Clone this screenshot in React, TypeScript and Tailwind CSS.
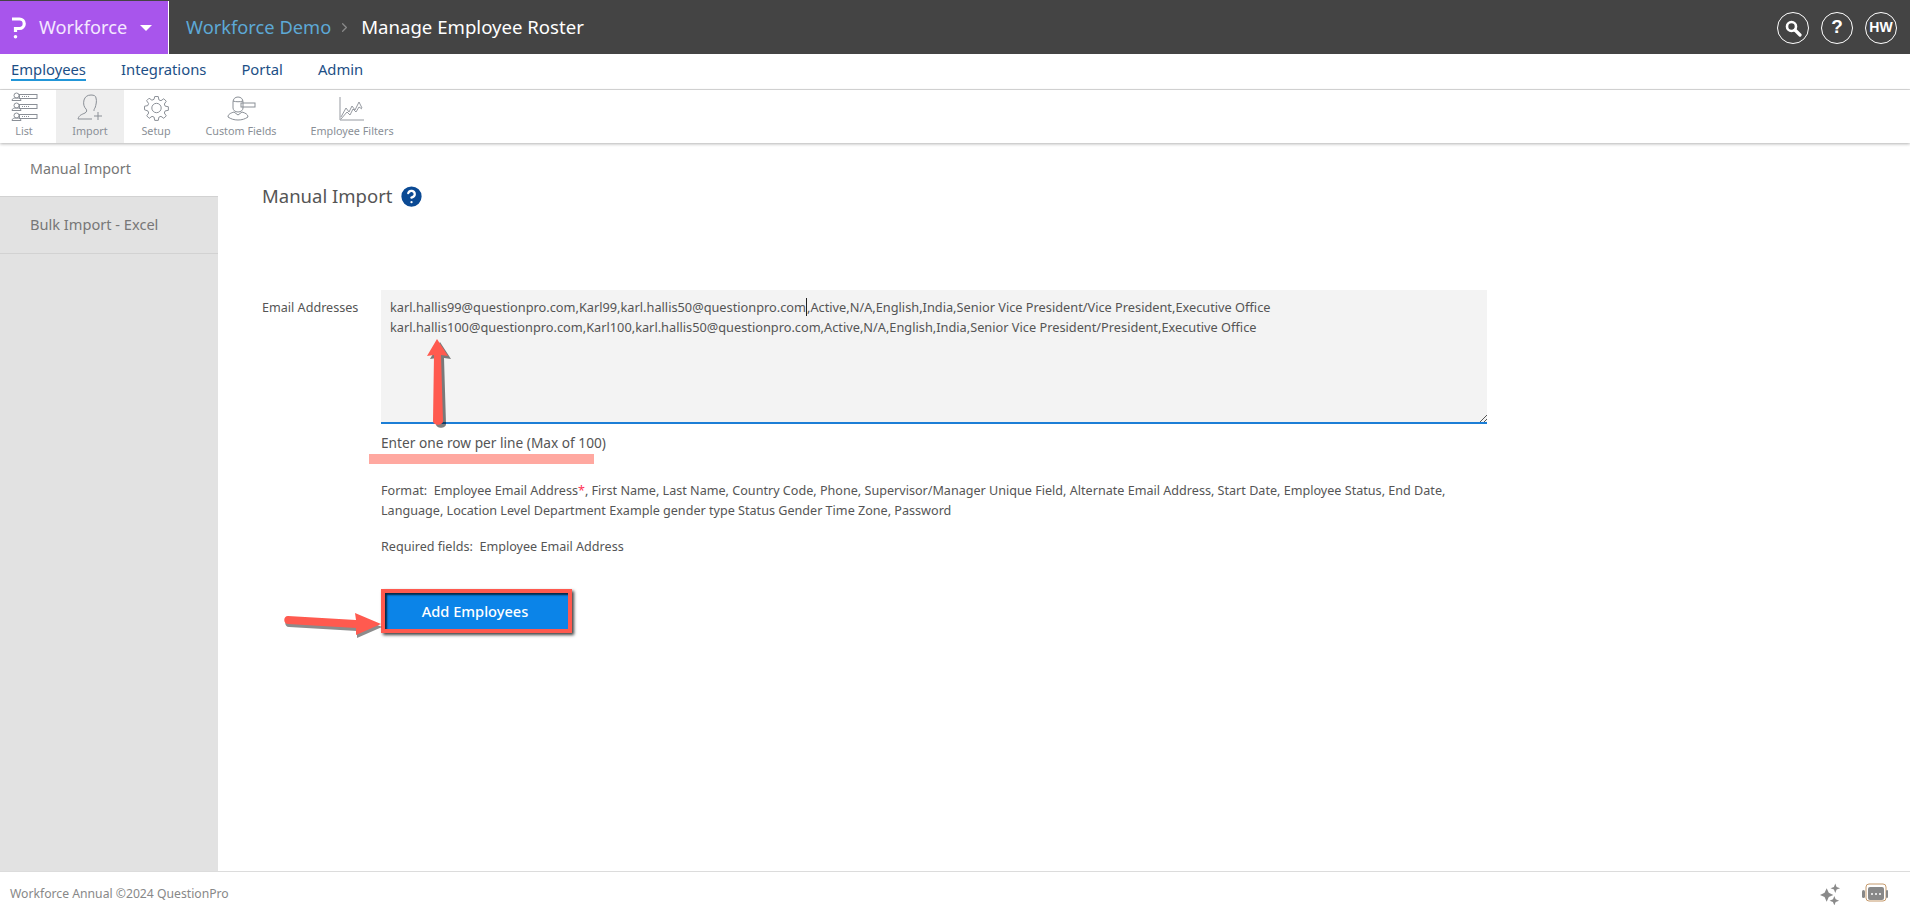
import React from "react";
import { ChevronRight, HelpCircle } from "lucide-react";

function ListIcon() {
  return (
    <svg width="27" height="29" viewBox="0 0 27 29" fill="none" stroke="#8a8f96" strokeWidth="1">
      {[1, 11, 21].map((y) => (
        <g key={y}>
          <circle cx="5.5" cy={y + 2.5} r="2.5" />
          <path d={`M1 ${y + 7.5}c0-2 2-2.5 4.5-2.5s4.5 .5 4.5 2.5z`} />
          <rect x="8.5" y={y + 1.5} width="17.5" height="4" />
          <path d={`M11 ${y + 3.5}h7`} strokeDasharray="1 1" />
        </g>
      ))}
    </svg>
  );
}
function ImportIcon() {
  return (
    <svg width="27" height="27" viewBox="0 0 27 27" fill="none" stroke="#8a8f96" strokeWidth="1">
      <path d="M1 25c1-4 4-4.500 7-6 2-1 2-3 1-4-2-2-3-5-2-9 1-3 3-5 7-5 3 0 5 1 5 3 1 3 0 7-1 10-1 1-1 2-1 3" />
      <path d="M1 25h14" />
      <path d="M21 18v8M17 22h8" />
    </svg>
  );
}
function GearIcon() {
  return (
    <svg width="25" height="26" viewBox="0 0 24 24" fill="none" stroke="#8a8f96" strokeWidth="0.95">
      <circle cx="12" cy="12" r="4.5" />
      <path d="M10.300 1h3.400l.6 3.200 2 .8 2.700-1.900 2.400 2.400-1.900 2.700.8 2 3.100.6v3.400l-3.100.6-.8 2 1.900 2.700-2.400 2.400-2.700-1.900-2 .8-.6 3.100h-3.400l-.6-3.100-2-.8-2.700 1.900-2.400-2.400 1.900-2.700-.8-2L.5 13.700v-3.400l3.100-.6.8-2-1.900-2.700 2.400-2.400 2.700 1.900 2-.8z" />
    </svg>
  );
}
function FieldsIcon() {
  return (
    <svg width="29" height="25" viewBox="0 0 29 25" fill="none" stroke="#8a8f96" strokeWidth="1">
      <path d="M6 6c0-3 2-5 5-5s5 2 5 5v6c0 2-2 4-5 4s-5-2-5-4z" />
      <path d="M6 5c3 1 7 1 10 0" />
      <rect x="14" y="7" width="14" height="4" />
      <path d="M1 21c0-3 3-4 6-5l4 3 4-3c3 1 6 2 6 5-3 2-6 3-10 3s-7-1-10-3z" />
    </svg>
  );
}
function ChartIcon() {
  return (
    <svg width="26" height="24" viewBox="0 0 26 24" fill="none" stroke="#8a8f96" strokeWidth="0.9">
      <path d="M1 0v23h24" />
      <path d="M2 20l5-9 3 4 3-6 3 4 4-8 3 6" />
      <path d="M2 22l6-7 3 3 3-6 3 3 3-5 3 2" />
    </svg>
  );
}

function Arrows() {
  const up = "M12 0 L2 17 L9 16 L8 82 C8 87 18 87 18 82 L16 16 L23 17 Z";
  const right = "M4 3 L72 7 L71 0 L97 11 L72 22 L72 15 L4 11 C-1 11 -1 3 4 3 Z";
  return (
    <>
      <svg className="absolute left-[425px] top-[339px]" width="36" height="92" viewBox="0 0 36 92">
        <path d={up} transform="translate(3 3)" fill="#000" opacity="0.5" />
        <path d={up} fill="#ff5a4f" />
      </svg>
      <svg className="absolute left-[284px] top-[613px]" width="102" height="30" viewBox="0 0 102 30">
        <path d={right} transform="translate(1 3)" fill="#000" opacity="0.45" />
        <path d={right} fill="#ff5a4f" />
      </svg>
    </>
  );
}

export default function App() {
  const tools = [
    { label: "List", icon: <ListIcon />, w: "w-[56px] pr-[8px]" },
    { label: "Import", icon: <ImportIcon />, w: "w-[68px]", active: true },
    { label: "Setup", icon: <GearIcon />, w: "w-[64px]" },
    { label: "Custom Fields", icon: <FieldsIcon />, w: "w-[106px]" },
    { label: "Employee Filters", icon: <ChartIcon />, w: "w-[116px]" },
  ];
  return (
    <div className="relative flex h-[916px] w-[1910px] flex-col overflow-hidden bg-white font-['Noto_Sans',sans-serif] text-[#555]">
      <header className="flex h-[54px] shrink-0 items-center bg-[#444444] pt-px">
        <div className="flex h-full w-[169px] items-center border-r border-white bg-[#a855ec] pl-[11px] text-white">
          <svg width="15" height="22" viewBox="0 0 15 22" fill="none" stroke="white" strokeWidth="3.200">
            <path d="M1 2h7.500a4.500 4.500 0 0 1 0 9.500H4.500V15" />
            <circle cx="4.500" cy="19.800" r="1.800" fill="white" stroke="none" />
          </svg>
          <span className="ml-[13px] text-[18.2px] text-[#f4e8ff]">Workforce</span>
          <span className="ml-[13px] h-0 w-0 border-x-[6px] border-t-[6px] border-x-transparent border-t-white" />
        </div>
        <span className="mb-[2px] ml-[17px] text-[18.3px] text-[#5da9d6]">Workforce Demo</span>
        <ChevronRight className="mx-[6px] text-[#8a8a8a]" size={15} strokeWidth={2} />
        <span className="mb-[2px] ml-[3px] text-[18.6px] text-white">Manage Employee Roster</span>
        <div className="ml-auto mr-[13px] flex items-center gap-[12px] text-white">
          <span className="flex h-[32px] w-[32px] items-center justify-center rounded-full border border-white">
            <svg width="18" height="18" viewBox="0 0 18 18" fill="none" stroke="white">
              <circle cx="7.500" cy="7.500" r="4.500" strokeWidth="2.600" />
              <path d="M11 11l5 5" strokeWidth="3.200" strokeLinecap="round" />
            </svg>
          </span>
          <span className="flex h-[32px] w-[32px] items-center justify-center rounded-full border border-white font-['Liberation_Sans',sans-serif] text-[19px] font-bold">?</span>
          <span className="flex h-[32px] w-[32px] items-center justify-center rounded-full border border-white font-['Liberation_Sans',sans-serif] text-[14px] font-bold">HW</span>
        </div>
      </header>

      <nav className="flex h-[36px] shrink-0 items-center gap-[35px] border-b border-[#dcdcdc] pb-[4px] pl-[11px] text-[14.8px] text-[#1d4f86]">
        <span className="border-b-2 border-[#2296d8] leading-[20px]">Employees</span>
        <span>Integrations</span>
        <span>Portal</span>
        <span>Admin</span>
      </nav>

      <div className="z-10 flex h-[53px] shrink-0 shadow-[0_1px_3px_rgba(0,0,0,0.3)]">
        {tools.map((t) => (
          <div key={t.label} className={`flex ${t.w} flex-col items-center ${t.active ? "bg-[#eeeeee]" : ""}`}>
            <div className="flex h-[31px] items-end">{t.icon}</div>
            <span className="mt-[3px] text-[10.8px] leading-[14px] text-[#8a8f96]">{t.label}</span>
          </div>
        ))}
      </div>

      <div className="flex min-h-0 flex-1">
        <aside className="w-[218px] shrink-0 bg-[#e2e2e2] text-[#777]">
          <div className="flex h-[54px] items-center border-b border-[#d2d2d2] bg-white pb-[2px] pl-[30px] text-[14.3px]">Manual Import</div>
          <div className="flex h-[57px] items-center border-b border-[#d2d2d2] pl-[30px] text-[14.6px]">Bulk Import - Excel</div>
        </aside>
        <main className="min-w-0 flex-1 pl-[44px]">
          <div className="mt-[39px] flex h-[28px] items-center gap-[6px]">
            <h1 className="text-[18.5px] font-normal text-[#555]">Manual Import</h1>
            <HelpCircle className="fill-[#0b4a94] text-white" size={27} strokeWidth={2} />
          </div>
          <div className="mt-[80px] flex">
            <label className="w-[119px] shrink-0 pt-[9px] text-[12.6px] text-[#555]">Email Addresses</label>
            <div className="w-[1106px]">
              <div className="relative h-[134px] border-b-2 border-[#1c7ed6] bg-[#f3f3f3] px-[9px] pt-[7px] text-[12.78px] leading-[20px] whitespace-nowrap text-[#555]">
                <div>karl.hallis99@questionpro.com,Karl99,karl.hallis50@questionpro.com<span className="border-l border-[#222]" />,Active,N/A,English,India,Senior Vice President/Vice President,Executive Office</div>
                <div>karl.hallis100@questionpro.com,Karl100,karl.hallis50@questionpro.com,Active,N/A,English,India,Senior Vice President/President,Executive Office</div>
                <svg className="absolute bottom-0 right-0" width="8" height="8" viewBox="0 0 8 8" stroke="#555" strokeWidth="1">
                  <path d="M1 8L8 1M5 8l3-3" />
                </svg>
              </div>
              <p className="mt-[9px] text-[13.7px] leading-[20px]">Enter one row per line (Max of 100)</p>
              <p className="mt-[28px] text-[12.6px] leading-[20px]">
                Format:&nbsp; Employee Email Address<span className="text-[#ff3355]">*</span>, First Name, Last Name, Country Code, Phone, Supervisor/Manager Unique Field, Alternate Email Address, Start Date, Employee Status, End Date, Language, Location Level Department Example gender type Status Gender Time Zone, Password
              </p>
              <p className="mt-[16px] text-[12.6px] leading-[20px]">Required fields:&nbsp; Employee Email Address</p>
              <button className="mt-[32px] flex h-[44px] w-[191px] items-center justify-center border-[4px] border-[#ff5a4f] bg-[#0b84e8] pr-[3px] pt-[2px] text-[14.6px] font-medium text-white shadow-[2px_2px_3px_rgba(0,0,0,0.75),inset_2px_2px_2px_rgba(0,0,0,0.7)]">
                Add Employees
              </button>
            </div>
          </div>
        </main>
      </div>

      <footer className="flex h-[45px] shrink-0 items-center justify-between border-t border-[#dcdcdc] bg-white pl-[10px] pr-[21px] text-[12.2px] text-[#888]">
        <span>Workforce Annual ©2024 QuestionPro</span>
        <div className="flex items-center gap-[20px]">
          <svg width="21" height="22" viewBox="0 0 22 22" fill="#8a8a8a">
            <path d="M7 5l2.200 4.800L14 12l-4.800 2.200L7 19l-2.200-4.800L0 12l4.800-2.200z" />
            <path d="M16 0l1.400 3.600L21 5l-3.600 1.400L16 10l-1.400-3.600L11 5l3.600-1.400z" />
            <path d="M15 13l1.400 3.600L20 18l-3.600 1.400L15 23l-1.400-3.600L10 18l3.600-1.400z" />
          </svg>
          <svg width="28" height="24" viewBox="0 0 28 24" fill="none">
            <rect x="5" y="2" width="20" height="17" rx="3" stroke="#c59a6c" />
            <rect x="7" y="5" width="16" height="13" rx="2" fill="#888" />
            <rect x="1" y="8" width="3" height="8" rx="1.500" fill="#888" />
            <rect x="25" y="8" width="2" height="8" rx="1" fill="#888" />
            <circle cx="11" cy="12" r="1" fill="#fff" />
            <circle cx="15" cy="12" r="1" fill="#fff" />
            <circle cx="19" cy="12" r="1" fill="#fff" />
          </svg>
        </div>
      </footer>

      <div className="absolute left-[369px] top-[454px] h-[10px] w-[225px] bg-[#ffa8a0]" />
      <Arrows />
    </div>
  );
}
